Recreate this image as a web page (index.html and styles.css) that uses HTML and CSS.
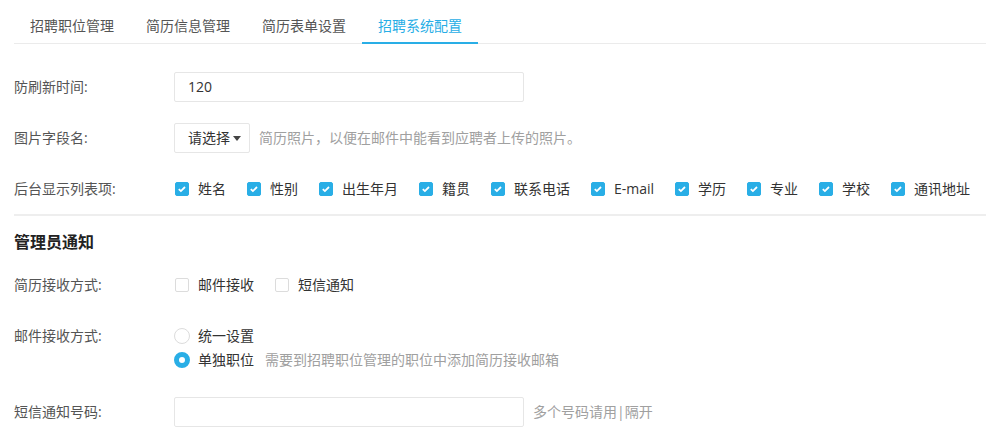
FILE: index.html
```html
<!DOCTYPE html>
<html lang="zh-CN">
<head>
    <meta charset="UTF-8">
    <meta name="viewport" content="width=device-width, initial-scale=1.0">
    <title>招聘系统配置</title>
    <link rel="stylesheet" href="styles.css">
</head>
<body>
    <div class="container">
        <ul class="tabs">
            <li class="tab">招聘职位管理</li>
            <li class="tab">简历信息管理</li>
            <li class="tab">简历表单设置</li>
            <li class="tab active">招聘系统配置</li>
        </ul>

        <div class="form">
            <div class="row row-first">
                <div class="label">防刷新时间:</div>
                <div class="input">120</div>
            </div>

            <div class="row">
                <div class="label">图片字段名:</div>
                <div class="select">请选择<span class="caret"></span></div>
                <span class="hint">简历照片，以便在邮件中能看到应聘者上传的照片。</span>
            </div>

            <div class="row">
                <div class="label">后台显示列表项:</div>
                <div class="checks">
                    <span class="check on"><i class="box"></i>姓名</span>
                    <span class="check on"><i class="box"></i>性别</span>
                    <span class="check on"><i class="box"></i>出生年月</span>
                    <span class="check on"><i class="box"></i>籍贯</span>
                    <span class="check on"><i class="box"></i>联系电话</span>
                    <span class="check on"><i class="box"></i>E-mail</span>
                    <span class="check on"><i class="box"></i>学历</span>
                    <span class="check on"><i class="box"></i>专业</span>
                    <span class="check on"><i class="box"></i>学校</span>
                    <span class="check on"><i class="box"></i>通讯地址</span>
                </div>
            </div>

            <div class="divider"></div>

            <h3 class="section-title">管理员通知</h3>

            <div class="row row-after-title">
                <div class="label">简历接收方式:</div>
                <div class="checks">
                    <span class="check"><i class="box"></i>邮件接收</span>
                    <span class="check"><i class="box"></i>短信通知</span>
                </div>
            </div>

            <div class="row row-top">
                <div class="label">邮件接收方式:</div>
                <div class="radios">
                    <span class="radio"><i class="dot"></i>统一设置</span>
                    <span class="radio on"><i class="dot"></i>单独职位<span class="hint">需要到招聘职位管理的职位中添加简历接收邮箱</span></span>
                </div>
            </div>

            <div class="row row-last">
                <div class="label">短信通知号码:</div>
                <div class="input"></div>
                <span class="hint">多个号码请用|隔开</span>
            </div>
        </div>
    </div>
</body>
</html>
```

FILE: styles.css
```css
* {
    box-sizing: border-box;
}

body {
    margin: 0;
    font-family: "Open Sans", "Noto Sans CJK SC", sans-serif;
    font-size: 14px;
    line-height: 20px;
    color: #555;
    background: #fff;
}

.container {
    padding-left: 14px;
}

.tabs {
    display: flex;
    margin: 0;
    padding: 0;
    list-style: none;
    border-bottom: 1px solid #ebebeb;
}

.tab {
    padding: 16px 16px 6px;
    line-height: 20px;
    color: #555;
    border-bottom: 2px solid transparent;
    margin-bottom: -1px;
}

.tab.active {
    color: #29aee6;
    border-bottom-color: #29aee6;
}

.row {
    display: flex;
    align-items: center;
    min-height: 30px;
    margin-top: 21px;
    white-space: nowrap;
}

.row-first {
    margin-top: 28px;
}

.row-after-title {
    margin-top: 18px;
}

.row-top {
    align-items: flex-start;
    margin-top: 24px;
}

.row-last {
    margin-top: 25px;
}

.label {
    flex-shrink: 0;
    width: 160px;
    line-height: 24px;
    color: #555;
}

.input {
    flex-shrink: 0;
    width: 350px;
    height: 30px;
    border: 1px solid #e6e6e6;
    border-radius: 2px;
    padding-left: 13px;
    line-height: 28px;
    color: #333;
}

.select {
    display: flex;
    align-items: center;
    height: 30px;
    width: 76px;
    border: 1px solid #e6e6e6;
    border-radius: 2px;
    padding-left: 13px;
    color: #333;
}

.caret {
    width: 0;
    height: 0;
    margin-left: 3px;
    margin-top: 1px;
    border-left: 4.5px solid transparent;
    border-right: 4.5px solid transparent;
    border-top: 5px solid #444;
}

.hint {
    margin-left: 9px;
    color: #a0a0a0;
}

.checks {
    display: flex;
    align-items: center;
}

.check {
    display: flex;
    align-items: center;
    flex-shrink: 0;
    margin-right: 20px;
    color: #333;
}

.check:last-child {
    margin-right: 0;
}

.box {
    flex-shrink: 0;
    width: 14px;
    height: 14px;
    margin-left: 1px;
    margin-right: 9px;
    border: 1px solid #dcdcdc;
    border-radius: 2px;
    background: #fff;
}

.check.on .box {
    border-color: #29aee6;
    background: #29aee6 url("data:image/svg+xml,%3Csvg xmlns='http://www.w3.org/2000/svg' width='14' height='14'%3E%3Cpath d='M3.8 7.1l2.1 2 4.1-4.1' fill='none' stroke='%23fff' stroke-width='1.8'/%3E%3C/svg%3E") center no-repeat;
}

.divider {
    height: 2px;
    margin-top: 10px;
    background: #eeeeee;
}

.section-title {
    margin: 16px 0 0;
    font-size: 16px;
    line-height: 20px;
    font-weight: bold;
    color: #222;
}

.radios {
    display: flex;
    flex-direction: column;
}

.radio {
    display: flex;
    align-items: center;
    height: 24px;
    color: #333;
}

.dot {
    flex-shrink: 0;
    width: 16px;
    height: 16px;
    margin-right: 8px;
    border: 1px solid #dcdcdc;
    border-radius: 50%;
    background: #fff;
}

.radio.on .dot {
    border: 5px solid #29aee6;
}

.radio .hint {
    margin-left: 11px;
}
```
